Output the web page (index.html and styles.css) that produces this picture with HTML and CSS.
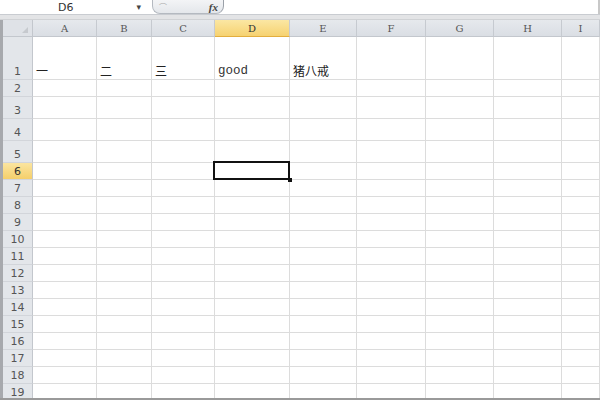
FILE: index.html
```html
<!DOCTYPE html>
<html lang="zh">
<head>
<meta charset="utf-8">
<link rel="stylesheet" href="styles.css">
</head>
<body>
<div class="app">
  <div class="formula-bar">
    <div class="name-box"><span class="name">D6</span><span class="drop">▾</span></div>
    <div class="fx-box"><span class="fx-grip">⌒</span><span class="fx">fx</span></div>
    <div class="formula-input"></div>
  </div>
  <div class="band"></div>
  <div class="sheet-wrap">
    <div class="edge"></div>
    <div class="sheet">
      <div class="corner"></div><div class="col-head">A</div><div class="col-head">B</div><div class="col-head">C</div><div class="col-head active">D</div><div class="col-head">E</div><div class="col-head">F</div><div class="col-head">G</div><div class="col-head">H</div><div class="col-head">I</div>
      <div class="row-head">1</div><div class="cell">一</div><div class="cell">二</div><div class="cell">三</div><div class="cell latin">good</div><div class="cell">猪八戒</div><div class="cell"></div><div class="cell"></div><div class="cell"></div><div class="cell"></div>
      <div class="row-head">2</div><div class="cell"></div><div class="cell"></div><div class="cell"></div><div class="cell"></div><div class="cell"></div><div class="cell"></div><div class="cell"></div><div class="cell"></div><div class="cell"></div>
      <div class="row-head">3</div><div class="cell"></div><div class="cell"></div><div class="cell"></div><div class="cell"></div><div class="cell"></div><div class="cell"></div><div class="cell"></div><div class="cell"></div><div class="cell"></div>
      <div class="row-head">4</div><div class="cell"></div><div class="cell"></div><div class="cell"></div><div class="cell"></div><div class="cell"></div><div class="cell"></div><div class="cell"></div><div class="cell"></div><div class="cell"></div>
      <div class="row-head">5</div><div class="cell"></div><div class="cell"></div><div class="cell"></div><div class="cell"></div><div class="cell"></div><div class="cell"></div><div class="cell"></div><div class="cell"></div><div class="cell"></div>
      <div class="row-head active">6</div><div class="cell"></div><div class="cell"></div><div class="cell"></div><div class="cell selected"></div><div class="cell"></div><div class="cell"></div><div class="cell"></div><div class="cell"></div><div class="cell"></div>
      <div class="row-head">7</div><div class="cell"></div><div class="cell"></div><div class="cell"></div><div class="cell"></div><div class="cell"></div><div class="cell"></div><div class="cell"></div><div class="cell"></div><div class="cell"></div>
      <div class="row-head">8</div><div class="cell"></div><div class="cell"></div><div class="cell"></div><div class="cell"></div><div class="cell"></div><div class="cell"></div><div class="cell"></div><div class="cell"></div><div class="cell"></div>
      <div class="row-head">9</div><div class="cell"></div><div class="cell"></div><div class="cell"></div><div class="cell"></div><div class="cell"></div><div class="cell"></div><div class="cell"></div><div class="cell"></div><div class="cell"></div>
      <div class="row-head">10</div><div class="cell"></div><div class="cell"></div><div class="cell"></div><div class="cell"></div><div class="cell"></div><div class="cell"></div><div class="cell"></div><div class="cell"></div><div class="cell"></div>
      <div class="row-head">11</div><div class="cell"></div><div class="cell"></div><div class="cell"></div><div class="cell"></div><div class="cell"></div><div class="cell"></div><div class="cell"></div><div class="cell"></div><div class="cell"></div>
      <div class="row-head">12</div><div class="cell"></div><div class="cell"></div><div class="cell"></div><div class="cell"></div><div class="cell"></div><div class="cell"></div><div class="cell"></div><div class="cell"></div><div class="cell"></div>
      <div class="row-head">13</div><div class="cell"></div><div class="cell"></div><div class="cell"></div><div class="cell"></div><div class="cell"></div><div class="cell"></div><div class="cell"></div><div class="cell"></div><div class="cell"></div>
      <div class="row-head">14</div><div class="cell"></div><div class="cell"></div><div class="cell"></div><div class="cell"></div><div class="cell"></div><div class="cell"></div><div class="cell"></div><div class="cell"></div><div class="cell"></div>
      <div class="row-head">15</div><div class="cell"></div><div class="cell"></div><div class="cell"></div><div class="cell"></div><div class="cell"></div><div class="cell"></div><div class="cell"></div><div class="cell"></div><div class="cell"></div>
      <div class="row-head">16</div><div class="cell"></div><div class="cell"></div><div class="cell"></div><div class="cell"></div><div class="cell"></div><div class="cell"></div><div class="cell"></div><div class="cell"></div><div class="cell"></div>
      <div class="row-head">17</div><div class="cell"></div><div class="cell"></div><div class="cell"></div><div class="cell"></div><div class="cell"></div><div class="cell"></div><div class="cell"></div><div class="cell"></div><div class="cell"></div>
      <div class="row-head">18</div><div class="cell"></div><div class="cell"></div><div class="cell"></div><div class="cell"></div><div class="cell"></div><div class="cell"></div><div class="cell"></div><div class="cell"></div><div class="cell"></div>
      <div class="row-head">19</div><div class="cell"></div><div class="cell"></div><div class="cell"></div><div class="cell"></div><div class="cell"></div><div class="cell"></div><div class="cell"></div><div class="cell"></div><div class="cell"></div>
    </div>
  </div>
</div>
</body>
</html>
```
FILE: styles.css
```css
html, body { margin: 0; padding: 0; }
body {
  width: 600px; height: 400px; overflow: hidden; background: #fff;
  font-family: "Noto Sans CJK SC", "DejaVu Sans", sans-serif;
}
.app { width: 600px; height: 400px; display: flex; flex-direction: column; overflow: hidden; }

.formula-bar {
  height: 14px; display: flex; align-items: stretch;
  border-bottom: 1px solid #c9ccd1; background: #fff;
}
.name-box {
  width: 152px; display: flex; align-items: center;
  font-family: "DejaVu Sans", sans-serif; font-size: 11px; color: #333;
}
.name { margin-left: 58px; }
.drop { margin-left: 63px; font-size: 9px; color: #444; }
.fx-box {
  width: 72px; height: 14px; box-sizing: border-box;
  border: 1px solid #b4b9c0; border-top: none; border-radius: 0 0 8px 8px;
  border-right-color: #9aa0a8;
  background: linear-gradient(#f3f4f6, #e4e7eb);
  display: flex; align-items: center; justify-content: space-between;
  padding: 0 5px 0 6px;
}
.fx-grip { font-size: 8px; color: #aaa; line-height: 10px; }
.fx { font-family: "Liberation Serif", serif; font-style: italic; font-weight: bold; font-size: 11px; color: #444; line-height: 12px; }
.formula-input { flex: 1; border-right: 2px solid #c8c8c8; }

.band { height: 5px; background: #e3e4e6; border-bottom: 1px solid #d0d2d5; box-sizing: border-box; }

.sheet-wrap { flex: 1; display: flex; border-bottom: 2px solid #9a9a9a; min-height: 0; }
.edge { width: 3px; background: #a7a9ad; }
.sheet {
  flex: 1; display: grid; overflow: hidden;
  grid-template-columns: 30px 64px 55px 63px 75px 67px 69px 68px 68px 1fr;
  grid-template-rows: 17px 43px 17px 22px 22px 22px repeat(14, 17px);
}
.corner {
  background: #dfe2e7; border-right: 1px solid #c3c7cd; border-bottom: 1px solid #c3c7cd;
  position: relative;
}
.corner::after {
  content: ""; position: absolute; right: 4px; bottom: 3px;
  border-left: 6px solid transparent; border-bottom: 6px solid #c6c9ce;
}
.col-head {
  background: linear-gradient(#e6e9ed, #dadee4);
  border-right: 1px solid #c6cad0; border-bottom: 1px solid #c3c7cd;
  font-family: "DejaVu Serif", serif; font-size: 10px; color: #555;
  display: flex; align-items: center; justify-content: center;
}
.col-head.active {
  background: linear-gradient(#fbe7a3, #f6d271);
  border-bottom: 1px solid #e3ae3e; color: #333;
}
.row-head {
  background: #e3e6ea; border-right: 1px solid #c3c7cd; border-bottom: 1px solid #d2d5da;
  font-family: "DejaVu Sans", sans-serif; font-size: 11px; color: #555;
  display: flex; align-items: flex-end; justify-content: center; line-height: 15px;
}
.row-head.active { background: linear-gradient(#fbe5a0, #f5cf6b); color: #333; }
.cell {
  border-right: 1px solid #dcdcdc; border-bottom: 1px solid #dcdcdc;
  font-size: 12px; color: #222; display: flex; align-items: flex-end;
  padding-left: 3px; line-height: 16px; white-space: nowrap; position: relative;
}
.cell.latin { font-family: "Liberation Mono", "DejaVu Sans Mono", monospace; font-size: 12.5px; color: #333; }
.cell.selected::after {
  content: ""; position: absolute; left: -2px; top: -2px; right: -1px; bottom: -1px;
  border: 2px solid #111;
}
.cell.selected::before {
  content: ""; position: absolute; right: -3px; bottom: -3px; width: 4px; height: 4px;
  background: #111; z-index: 1;
}
```
